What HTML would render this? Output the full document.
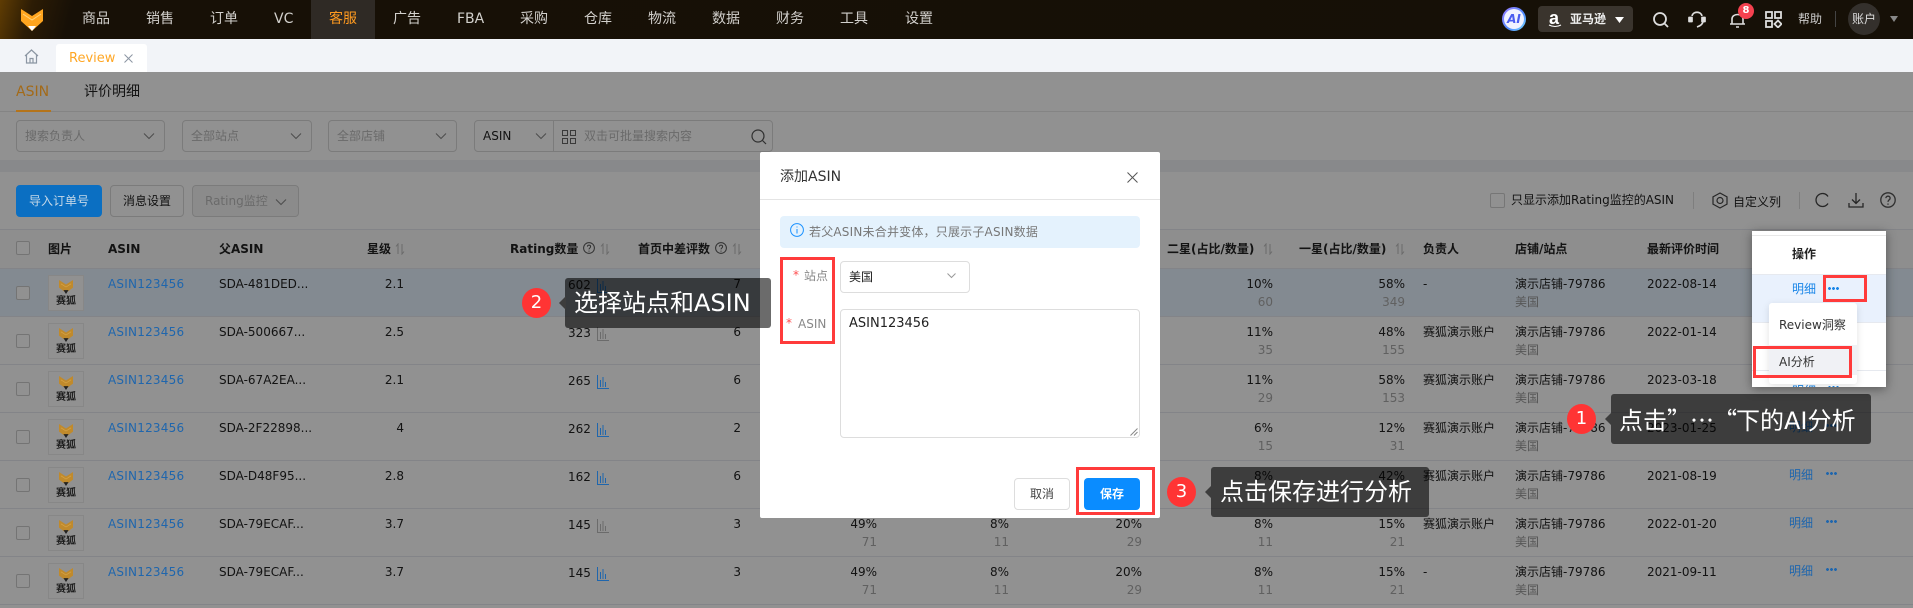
<!DOCTYPE html>
<html lang="zh"><head><meta charset="utf-8"><title>Review</title>
<style>
*{box-sizing:border-box}
html,body{margin:0;padding:0}
body{width:1913px;height:608px;overflow:hidden;position:relative;background:#fff;font:12px/18px "DejaVu Sans","Noto Sans CJK SC",sans-serif;color:#222}
.a,.r span,.r i,.r svg{position:absolute;white-space:nowrap}
.a{display:block}
#top{position:absolute;left:0;top:0;width:1913px;height:39px;background:linear-gradient(105deg,#5f3c03 0,#2c1c05 32px,#171006 72px,#161007 100%)}
#top .n{position:absolute;top:10px;font-size:14px;line-height:18px;color:#d2d0cc;white-space:nowrap}
#tabs{position:absolute;left:0;top:39px;width:1913px;height:33px;background:#f2f4f8}
.r{position:absolute;left:0;width:1913px;height:48px;border-bottom:1px solid #e6e9ef;background:#fff}
.ck{left:16px;top:17px;width:14px;height:14px;border:1px solid #ccc;background:#fff;border-radius:2px}
.lg{left:48px;top:6px;width:36px;height:36px;border:1px solid #eee;background:#fff}
.lg svg{left:9px;top:4px;z-index:2}
.lg b{position:absolute;left:7px;top:19px;font-size:10px;line-height:13px;color:#333}
.r .as{left:108px;top:6px;color:#1f66ad;letter-spacing:.22px;z-index:2}
.sd{left:219px;top:6px;color:#222}
.st{right:1509px;top:6px}
.ra{left:568px;top:7px}
.r .ic{left:597px;top:10px;z-index:2}
.sc{right:1172px;top:6px}
.p1{right:1036px}.p2{right:904px}.p3{right:771px}.p4{right:640px}.p5{right:508px}
.up{top:6px}.dn{top:24px;color:#aaa}
.ow{left:1423px;top:6px}
.sh{left:1515px;top:6px}
.si{left:1515px;top:24px;color:#999}
.dt{left:1647px;top:6px}
.r .mx{left:1789px;top:5px;color:#1f66ad;z-index:2}
.dd{left:1826px;top:11px;width:11px;height:3px;background:radial-gradient(circle at 1.5px 1.5px,#1a86e8 1.4px,transparent 1.5px) 0 0/4px 3px repeat-x}
.r .dd{z-index:2;background-image:radial-gradient(circle at 1.5px 1.5px,#1f66ad 1.4px,transparent 1.5px)}
.h{position:absolute;top:240px;font-weight:bold;color:#222;white-space:nowrap}
.sel{position:absolute;top:120px;height:32px;border:1px solid #d9d9d9;border-radius:4px;background:#fff;color:#bbb;padding:6px 8px;white-space:nowrap}
.sel svg{position:absolute;right:9px;top:11px}
.btn{position:absolute;top:185px;height:32px;border:1px solid #d9d9d9;border-radius:4px;background:#fff;text-align:center;line-height:30px}
#ov{position:absolute;left:0;top:72px;width:1913px;height:536px;background:rgba(0,0,0,.43);z-index:1}
#m{position:absolute;left:760px;top:152px;width:400px;height:366px;background:#fff;border-radius:2px;z-index:3}
.m{position:absolute;white-space:nowrap}
.red{position:absolute;border:3px solid #ff3b3b;z-index:3}
.co{position:absolute;height:50px;background:rgba(0,0,0,.58);border-radius:3px;color:#fff;font-size:24px;line-height:50px;white-space:nowrap;padding-left:8px;z-index:3}
.co:before{content:"";position:absolute;left:-6px;top:18px;border:7px solid transparent;border-left:0;border-right-color:#3d3d3d}
.bd{position:absolute;width:29px;height:30px;border-radius:50%;background:#ff3434;color:#fff;font-size:18px;line-height:30px;text-align:center;z-index:3}
#pop{position:absolute;left:1752px;top:231px;width:134px;height:156px;background:#fff;overflow:hidden;box-shadow:0 2px 10px rgba(0,0,0,.4);z-index:3}
</style></head><body>
<svg width="0" height="0" style="position:absolute"><defs>
<symbol id="so" viewBox="0 0 10 12"><path d="M3 11V1L1 3.5M7 1v10l2-2.5" fill="none" stroke="#bbb" stroke-width="1"/></symbol>
<symbol id="bar" viewBox="0 0 12 14"><path d="M.5 0v13.5H12M3.5 5v7M6 2v10M8.5 7v5" fill="none" stroke="#1f66ad" stroke-width="1"/></symbol>
<symbol id="bar2" viewBox="0 0 12 14"><path d="M.5 0v13.5H12M3.5 5v7M6 2v10M8.5 7v5" fill="none" stroke="#6b6b6b" stroke-width="1"/></symbol>
<symbol id="q" viewBox="0 0 12 12"><circle cx="6" cy="6" r="5.4" fill="none" stroke="#555"/><path d="M4.4 4.6C4.5 2.6 7.6 2.7 7.6 4.6 7.6 6 6 5.9 6 7.4M6 8.6v1" fill="none" stroke="#555"/></symbol>
<symbol id="fx" viewBox="0 0 22 22"><path d="M0 0 11 7 22 0V12L11 20 0 12Z" fill="#c08a2c"/><path d="M3 6l8 5 8-5" fill="none" stroke="#d8a548" stroke-width="1"/><path d="M7 16l4 6 4-6Z" fill="#222"/></symbol>
<symbol id="cv" viewBox="0 0 12 8"><path d="M1 1.5 6 6.5 11 1.5" fill="none" stroke="#888" stroke-width="1.1"/></symbol>
</defs></svg>

<div id="top">
<svg class="a" style="left:21px;top:9px" width="22" height="22" viewBox="0 0 22 22"><path d="M0 0 11 7 22 0V12L11 22 0 12Z" fill="#ffa51f"/><path d="M2 5l9 6 9-6" fill="none" stroke="#ffd27a" stroke-width="1"/><path d="M7 17h8l-4 5Z" fill="#fff"/></svg>
<div class="a" style="left:311px;top:0;width:64px;height:39px;background:#2f2a25"></div>
<span class="n" style="left:82px">商品</span><span class="n" style="left:146px">销售</span><span class="n" style="left:210px">订单</span><span class="n" style="left:274px">VC</span><span class="n" style="left:329px;color:#ff9a1f">客服</span><span class="n" style="left:393px">广告</span><span class="n" style="left:457px">FBA</span><span class="n" style="left:520px">采购</span><span class="n" style="left:584px">仓库</span><span class="n" style="left:648px">物流</span><span class="n" style="left:712px">数据</span><span class="n" style="left:776px">财务</span><span class="n" style="left:840px">工具</span><span class="n" style="left:905px">设置</span>
<div class="a" style="left:1502px;top:7px;width:24px;height:24px;border-radius:50%;background:linear-gradient(135deg,#9c7bff,#4f8cff 60%,#7fe0ff);padding:2px"><div style="width:20px;height:20px;border-radius:50%;background:#f1f2ff;color:#4a5cf0;font:italic bold 12px/20px 'DejaVu Sans';text-align:center">AI</div></div>
<div class="a" style="left:1538px;top:6px;width:95px;height:26px;background:#3a342d;border-radius:4px"></div>
<span class="a" style="left:1549px;top:8px;color:#fff;font:bold 18px/20px 'Liberation Sans'">a</span>
<svg class="a" style="left:1548px;top:24px" width="14" height="4"><path d="M1 1q6 3 12 0" stroke="#fff" fill="none"/></svg>
<span class="a" style="left:1570px;top:10px;color:#eee;font-weight:bold">亚马逊</span>
<svg class="a" style="left:1615px;top:17px" width="9" height="6"><path d="M0 0h9L4.500 6Z" fill="#fff"/></svg>
<svg class="a" style="left:1652px;top:11px" width="18" height="18" fill="none" stroke="#ddd" stroke-width="1.800"><circle cx="8" cy="8" r="6"/><path d="M12.500 12.500 16 16"/></svg>
<svg class="a" style="left:1688px;top:10px" width="18" height="18" fill="none" stroke="#ddd" stroke-width="1.700"><path d="M4 6C5 1 13 1 14 6"/><path d="M15 11c0 3-3 5-6 6"/><path d="M1 7.500h3v4H1ZM14 7.500h3v4h-3Z" fill="#ddd" stroke-linejoin="round"/></svg>
<svg class="a" style="left:1729px;top:12px" width="17" height="16" fill="none" stroke="#ddd" stroke-width="1.600"><path d="M1 12h15M3 12V7c0-6 11-6 11 0v5M7 15h3"/></svg>
<div class="a" style="left:1738px;top:3px;width:16px;height:16px;border-radius:50%;background:#f5414f;color:#fff;font-size:10px;line-height:16px;text-align:center;font-weight:bold">8</div>
<svg class="a" style="left:1765px;top:11px" width="17" height="17" fill="none" stroke="#ddd" stroke-width="1.800"><rect x="1" y="1" width="6" height="6"/><rect x="10" y="1" width="6" height="6"/><rect x="1" y="10" width="6" height="6"/><path d="M13 9.500 16.500 13 13 16.500 9.500 13Z"/></svg>
<span class="a" style="left:1798px;top:10px;color:#ccc">帮助</span>
<div class="a" style="left:1835px;top:11px;width:1px;height:16px;background:#444"></div>
<div class="a" style="left:1848px;top:3px;width:32px;height:32px;border-radius:50%;background:#34302c;color:#ddd;text-align:center;line-height:32px">账户</div>
<svg class="a" style="left:1890px;top:16px" width="8" height="6"><path d="M0 0h8L4 6Z" fill="#888"/></svg>
</div>

<div id="tabs">
<svg class="a" style="left:24px;top:10px" width="15" height="15" fill="none" stroke="#8c96a3" stroke-width="1.200"><path d="M1 7 7.500 1 14 7M2.500 6v8h10V6M6 14V9.500h3V14"/></svg>
<div class="a" style="left:56px;top:5px;width:91px;height:28px;background:#fff;border-radius:3px 3px 0 0"></div>
<span class="a" style="left:69px;top:11px;font-size:13px;color:#ffa726">Review</span>
<svg class="a" style="left:124px;top:15px" width="9" height="9" fill="none" stroke="#8c96a3"><path d="M.5.5l8 8M8.500.5l-8 8"/></svg>
</div>

<!-- page -->
<span class="a" style="left:16px;top:83px;font-size:14px;color:#a36a18;z-index:2">ASIN</span>
<span class="a" style="left:84px;top:83px;font-size:14px">评价明细</span>
<div class="a" style="left:0;top:111px;width:1913px;height:1px;background:#e8e8e8"></div>
<div class="a" style="left:16px;top:110px;width:35px;height:2px;background:#b5741a;z-index:2"></div>

<div class="sel" style="left:16px;width:149px">搜索负责人<svg width="12" height="8"><use href="#cv"/></svg></div>
<div class="sel" style="left:182px;width:130px">全部站点<svg width="12" height="8"><use href="#cv"/></svg></div>
<div class="sel" style="left:328px;width:129px">全部店铺<svg width="12" height="8"><use href="#cv"/></svg></div>
<div class="sel" style="left:474px;width:299px;color:#222">ASIN<svg style="right:auto;left:60px" width="12" height="8"><use href="#cv"/></svg>
<div class="a" style="left:78px;top:0;width:1px;height:30px;background:#d9d9d9"></div>
<svg class="a" style="left:87px;top:9px" width="14" height="14" fill="none" stroke="#666"><rect x=".5" y=".5" width="5" height="5"/><rect x="8.500" y=".5" width="5" height="5"/><rect x=".5" y="8.500" width="5" height="5"/><rect x="8.500" y="8.500" width="5" height="5"/></svg>
<span class="a" style="left:109px;top:6px;color:#bbb">双击可批量搜索内容</span>
<svg class="a" style="left:276px;top:8px" width="16" height="16" fill="none" stroke="#555" stroke-width="1.200"><circle cx="7" cy="7" r="6"/><path d="M11.500 11.500 15 15"/></svg>
</div>
<div class="a" style="left:0;top:160px;width:1913px;height:12px;background:#eff1f4"></div>

<div class="btn" style="left:16px;width:86px;background:#0b6fc2;border-color:#0b6fc2;color:#c5d8e8;z-index:2">导入订单号</div>
<div class="btn" style="left:110px;width:74px">消息设置</div>
<div class="btn" style="left:192px;width:107px;color:#bbb;background:#f5f5f5;text-align:left;padding-left:12px">Rating监控<svg class="a" style="left:82px;top:12px" width="12" height="8"><use href="#cv"/></svg></div>

<div class="a" style="left:1490px;top:193px;width:15px;height:15px;border:1px solid #d0d0d0;border-radius:2px"></div>
<span class="a" style="left:1511px;top:191px">只显示添加Rating监控的ASIN</span>
<div class="a" style="left:1693px;top:192px;width:1px;height:17px;background:#ddd"></div>
<svg class="a" style="left:1712px;top:192px" width="16" height="17" fill="none" stroke="#444" stroke-width="1.200"><path d="M8 1 15 4.800v7.400L8 16 1 12.200V4.800Z"/><circle cx="8" cy="8.500" r="3"/></svg>
<span class="a" style="left:1733px;top:193px">自定义列</span>
<div class="a" style="left:1799px;top:192px;width:1px;height:17px;background:#ddd"></div>
<svg class="a" style="left:1815px;top:192px" width="15" height="16" fill="none" stroke="#444" stroke-width="1.300"><path d="M13 4.500A6.500 6.500 0 1 0 13 11.500"/></svg>
<svg class="a" style="left:1848px;top:192px" width="16" height="16" fill="none" stroke="#444" stroke-width="1.300"><path d="M8 1v10M4 7.500 8 11.500 12 7.500M1 11v4h14v-4"/></svg>
<svg class="a" style="left:1880px;top:192px" width="16" height="16"><use href="#q"/></svg>

<!-- table head -->
<div class="a" style="left:0;top:229px;width:1913px;height:40px;background:#fafafa;border-top:1px solid #e6e9ef;border-bottom:1px solid #e6e9ef"></div>
<div class="a" style="left:16px;top:241px;width:14px;height:14px;border:1px solid #ccc;background:#fff;border-radius:2px"></div>
<span class="h" style="left:48px">图片</span><span class="h" style="left:108px">ASIN</span><span class="h" style="left:219px">父ASIN</span><span class="h" style="left:367px">星级</span>
<svg class="a" style="left:395px;top:243px" width="10" height="12"><use href="#so"/></svg>
<span class="h" style="left:510px">Rating数量</span><svg class="a" style="left:583px;top:242px" width="12" height="12"><use href="#q"/></svg><svg class="a" style="left:600px;top:243px" width="10" height="12"><use href="#so"/></svg>
<span class="h" style="left:638px">首页中差评数</span><svg class="a" style="left:715px;top:242px" width="12" height="12"><use href="#q"/></svg><svg class="a" style="left:732px;top:243px" width="10" height="12"><use href="#so"/></svg>
<span class="h" style="left:1167px">二星(占比/数量)</span><svg class="a" style="left:1263px;top:243px" width="10" height="12"><use href="#so"/></svg>
<span class="h" style="left:1299px">一星(占比/数量)</span><svg class="a" style="left:1395px;top:243px" width="10" height="12"><use href="#so"/></svg>
<span class="h" style="left:1423px">负责人</span><span class="h" style="left:1515px">店铺/站点</span><span class="h" style="left:1647px">最新评价时间</span>

<!-- rows -->
<div class="r" style="top:269px;background:#e6f3ff"><i class="ck"></i><div class="a lg"><svg width="16" height="14"><use href="#fx"/></svg><b>赛狐</b></div><span class="as">ASIN123456</span><span class="sd">SDA-481DED...</span><span class="st">2.1</span><span class="ra">602</span><svg class="ic" width="12" height="14"><use href="#bar"/></svg><span class="sc">7</span><span class="p4 up">10%</span><span class="p4 dn">60</span><span class="p5 up">58%</span><span class="p5 dn">349</span><span class="ow">-</span><span class="sh">演示店铺-79786</span><span class="si">美国</span><span class="dt">2022-08-14</span></div>
<div class="r" style="top:317px"><i class="ck"></i><div class="a lg"><svg width="16" height="14"><use href="#fx"/></svg><b>赛狐</b></div><span class="as">ASIN123456</span><span class="sd">SDA-500667...</span><span class="st">2.5</span><span class="ra">323</span><svg class="ic" width="12" height="14"><use href="#bar2"/></svg><span class="sc">6</span><span class="p4 up">11%</span><span class="p4 dn">35</span><span class="p5 up">48%</span><span class="p5 dn">155</span><span class="ow">赛狐演示账户</span><span class="sh">演示店铺-79786</span><span class="si">美国</span><span class="dt">2022-01-14</span></div>
<div class="r" style="top:365px"><i class="ck"></i><div class="a lg"><svg width="16" height="14"><use href="#fx"/></svg><b>赛狐</b></div><span class="as">ASIN123456</span><span class="sd">SDA-67A2EA...</span><span class="st">2.1</span><span class="ra">265</span><svg class="ic" width="12" height="14"><use href="#bar"/></svg><span class="sc">6</span><span class="p4 up">11%</span><span class="p4 dn">29</span><span class="p5 up">58%</span><span class="p5 dn">153</span><span class="ow">赛狐演示账户</span><span class="sh">演示店铺-79786</span><span class="si">美国</span><span class="dt">2023-03-18</span></div>
<div class="r" style="top:413px"><i class="ck"></i><div class="a lg"><svg width="16" height="14"><use href="#fx"/></svg><b>赛狐</b></div><span class="as">ASIN123456</span><span class="sd">SDA-2F22898...</span><span class="st">4</span><span class="ra">262</span><svg class="ic" width="12" height="14"><use href="#bar"/></svg><span class="sc">2</span><span class="p4 up">6%</span><span class="p4 dn">15</span><span class="p5 up">12%</span><span class="p5 dn">31</span><span class="ow">赛狐演示账户</span><span class="sh">演示店铺-79786</span><span class="si">美国</span><span class="dt">2023-01-25</span><span class="mx">明细</span><i class="dd"></i></div>
<div class="r" style="top:461px"><i class="ck"></i><div class="a lg"><svg width="16" height="14"><use href="#fx"/></svg><b>赛狐</b></div><span class="as">ASIN123456</span><span class="sd">SDA-D48F95...</span><span class="st">2.8</span><span class="ra">162</span><svg class="ic" width="12" height="14"><use href="#bar"/></svg><span class="sc">6</span><span class="p4 up">8%</span><span class="p5 up">42%</span><span class="ow">赛狐演示账户</span><span class="sh">演示店铺-79786</span><span class="si">美国</span><span class="dt">2021-08-19</span><span class="mx">明细</span><i class="dd"></i></div>
<div class="r" style="top:509px"><i class="ck"></i><div class="a lg"><svg width="16" height="14"><use href="#fx"/></svg><b>赛狐</b></div><span class="as">ASIN123456</span><span class="sd">SDA-79ECAF...</span><span class="st">3.7</span><span class="ra">145</span><svg class="ic" width="12" height="14"><use href="#bar2"/></svg><span class="sc">3</span><span class="p1 up">49%</span><span class="p1 dn">71</span><span class="p2 up">8%</span><span class="p2 dn">11</span><span class="p3 up">20%</span><span class="p3 dn">29</span><span class="p4 up">8%</span><span class="p4 dn">11</span><span class="p5 up">15%</span><span class="p5 dn">21</span><span class="ow">赛狐演示账户</span><span class="sh">演示店铺-79786</span><span class="si">美国</span><span class="dt">2022-01-20</span><span class="mx">明细</span><i class="dd"></i></div>
<div class="r" style="top:557px"><i class="ck"></i><div class="a lg"><svg width="16" height="14"><use href="#fx"/></svg><b>赛狐</b></div><span class="as">ASIN123456</span><span class="sd">SDA-79ECAF...</span><span class="st">3.7</span><span class="ra">145</span><svg class="ic" width="12" height="14"><use href="#bar"/></svg><span class="sc">3</span><span class="p1 up">49%</span><span class="p1 dn">71</span><span class="p2 up">8%</span><span class="p2 dn">11</span><span class="p3 up">20%</span><span class="p3 dn">29</span><span class="p4 up">8%</span><span class="p4 dn">11</span><span class="p5 up">15%</span><span class="p5 dn">21</span><span class="ow">-</span><span class="sh">演示店铺-79786</span><span class="si">美国</span><span class="dt">2021-09-11</span><span class="mx">明细</span><i class="dd"></i></div>

<div id="ov"></div>

<!-- modal -->
<div id="m">
<span class="m" style="left:20px;top:16px;font-size:14px;color:#333">添加ASIN</span>
<svg class="m" style="left:367px;top:20px" width="11" height="11" fill="none" stroke="#555"><path d="M.5.5l10 10M10.500.5l-10 10"/></svg>
<div class="m" style="left:0;top:47px;width:400px;height:1px;background:#e4e4e4"></div>
<div class="m" style="left:20px;top:64px;width:360px;height:32px;background:#e4f2fd;border-radius:4px"></div>
<svg class="m" style="left:30px;top:71px" width="14" height="14" fill="none" stroke="#1890ff"><circle cx="7" cy="7" r="6.400"/><path d="M7 6v4.500M7 3.500v1"/></svg>
<span class="m" style="left:49px;top:71px;color:#777;letter-spacing:.2px">若父ASIN未合并变体，只展示子ASIN数据</span>
<span class="m" style="left:33px;top:114px;color:#ff4d4f">*</span><span class="m" style="left:44px;top:115px;color:#888">站点</span>
<div class="m" style="left:80px;top:109px;width:130px;height:32px;border:1px solid #ddd;border-radius:4px;padding:6px 8px;font-size:12px;color:#222">美国<svg class="a" style="right:13px;top:11px" width="9" height="6"><path d="M.5.5 4.500 4.500 8.500.5" fill="none" stroke="#999"/></svg></div>
<span class="m" style="left:26px;top:162px;color:#ff4d4f">*</span><span class="m" style="left:38px;top:163px;color:#888">ASIN</span>
<div class="m" style="left:80px;top:157px;width:300px;height:129px;border:1px solid #ddd;border-radius:4px;padding:5px 8px;font-size:13px;color:#222">ASIN123456<svg class="a" style="right:1px;bottom:1px" width="8" height="8" stroke="#888"><path d="M7.500.5l-7 7M7.500 4l-3.500 3.500"/></svg></div>
<div class="m" style="left:254px;top:326px;width:56px;height:32px;border:1px solid #ddd;border-radius:4px;text-align:center;line-height:30px;color:#444">取消</div>
<div class="m" style="left:324px;top:326px;width:56px;height:32px;background:#0a8cff;border-radius:4px;text-align:center;line-height:32px;color:#fff;font-weight:bold">保存</div>
</div>

<!-- highlighted action column -->
<div id="pop">
<div class="m" style="left:0;top:4px;width:134px;height:1px;background:#e8e8e8"></div>
<b class="m" style="left:40px;top:14px;color:#222">操作</b>
<div class="m" style="left:0;top:43px;width:134px;height:49px;background:#e9f1fd;border-top:1px solid #e6e9ef;border-bottom:1px solid #e6e9ef"></div>
<span class="m" style="left:40px;top:49px;color:#1a86e8">明细</span>
<i class="m dd" style="left:76px;top:56px"></i>
<div class="m" style="left:0;top:139px;width:134px;height:1px;background:#e6e9ef"></div>
<span class="m" style="left:40px;top:151px;color:#1a86e8">明细</span>
<i class="m dd" style="left:76px;top:155px"></i>
<div class="m" style="left:17px;top:72px;width:88px;height:81px;background:#fff;border-radius:3px;box-shadow:0 2px 8px rgba(0,0,0,.12)"></div>
<span class="m" style="left:27px;top:85px;color:#333">Review洞察</span>
<div class="m" style="left:17px;top:114px;width:88px;height:30px;background:#f0f1f5"></div>
<span class="m" style="left:27px;top:122px;color:#333">AI分析</span>
</div>

<!-- red highlight boxes -->
<div class="red" style="left:1823px;top:275px;width:44px;height:27px"></div>
<div class="red" style="left:1753px;top:346px;width:99px;height:32px"></div>
<div class="red" style="left:780px;top:257px;width:55px;height:87px"></div>
<div class="red" style="left:1076px;top:467px;width:79px;height:48px"></div>

<!-- callouts -->
<div class="bd" style="left:1567px;top:404px">1</div>
<div class="co" style="left:1611px;top:394px;width:260px">点击<span style="font-family:'Noto Sans CJK SC',sans-serif;letter-spacing:-1px">”…“</span>下的AI分析</div>
<div class="bd" style="left:522px;top:288px">2</div>
<div class="co" style="left:565px;top:278px;width:206px;padding-left:9px">选择站点和ASIN</div>
<div class="bd" style="left:1167px;top:477px">3</div>
<div class="co" style="left:1211px;top:467px;width:218px;padding-left:9px">点击保存进行分析</div>
</body></html>
